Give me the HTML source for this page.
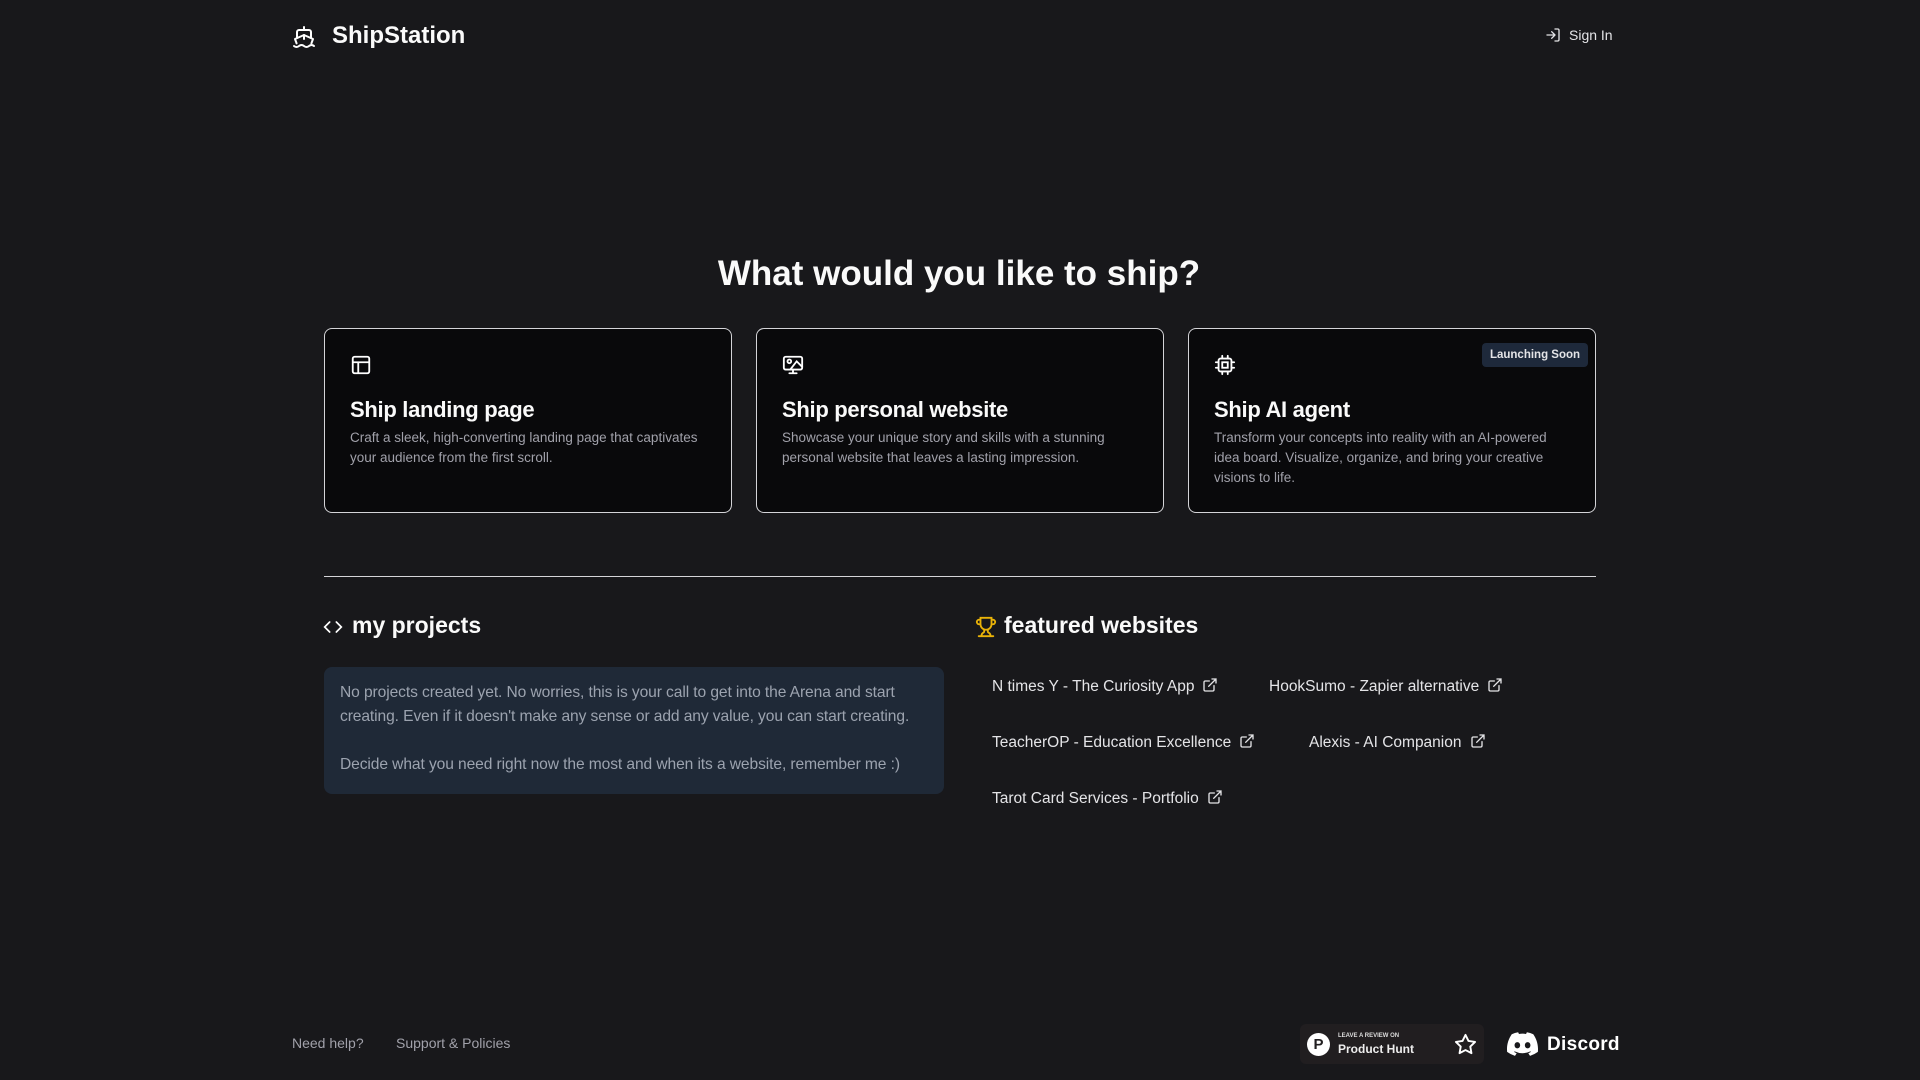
<!DOCTYPE html>
<html><head><meta charset="utf-8"><style>
*{margin:0;padding:0;box-sizing:border-box}
body{width:1920px;height:1080px;background:#18181b;font-family:"Liberation Sans",sans-serif;color:#fafafa;position:relative;overflow:hidden}
.a{position:absolute}
.card{position:absolute;top:328px;width:408px;height:185px;background:#09090b;border:1px solid #d4d4d8;border-radius:8px}
.card svg{position:absolute;left:25px;top:25px}
.card h3{position:absolute;left:25px;top:68px;font-size:22px;font-weight:700;letter-spacing:-0.3px}
.card p{position:absolute;left:25px;top:99px;white-space:nowrap;font-size:13.5px;line-height:20px;color:#a1a1aa}
.lk{position:absolute;font-size:15.5px;color:#e4e4e7;white-space:nowrap}
.lk svg{vertical-align:-2px;margin-left:8px}
</style></head><body>
<svg class="a" style="left:292px;top:25px" width="24" height="24" viewBox="0 0 24 24" fill="none" stroke="#fff" stroke-width="2" stroke-linecap="round" stroke-linejoin="round"><path d="M2 21c.6.5 1.2 1 2.5 1 2.5 0 2.5-2 5-2 1.3 0 1.9.5 2.5 1 .6.5 1.2 1 2.5 1 2.5 0 2.5-2 5-2 1.3 0 1.9.5 2.5 1"/><path d="M19.4 18.4 21 14l-9-4-9 4 1.6 4.4"/><path d="M19 13V7a2 2 0 0 0-2-2H7a2 2 0 0 0-2 2v6"/><path d="M12 10v4M12 2v3"/></svg>
<div class="a" style="left:332px;top:22px;font-size:24px;font-weight:700">ShipStation</div>
<svg class="a" style="left:1545px;top:27px" width="16" height="16" viewBox="0 0 24 24" fill="none" stroke="#e4e4e7" stroke-width="2" stroke-linecap="round" stroke-linejoin="round"><path d="M15 3h4a2 2 0 0 1 2 2v14a2 2 0 0 1-2 2h-4"/><path d="M10 17l5-5-5-5M15 12H3"/></svg>
<div class="a" style="left:1569px;top:27px;font-size:14px;color:#e4e4e7">Sign In</div>
<div class="a" style="left:0;width:1918px;top:254px;text-align:center;font-size:35px;font-weight:700">What would you like to ship?</div>

<div class="card" style="left:324px"><svg width="22" height="22" viewBox="0 0 24 24" fill="none" stroke="#fff" stroke-width="2"><rect x="3" y="3" width="18" height="18" rx="2"/><path d="M3 9h18M9 21V9"/></svg><h3>Ship landing page</h3><p>Craft a sleek, high-converting landing page that captivates<br>your audience from the first scroll.</p></div>
<div class="card" style="left:756px"><svg width="22" height="22" viewBox="0 0 24 24" fill="none" stroke="#fff" stroke-width="2" stroke-linecap="round"><rect x="2" y="3" width="20" height="14" rx="2"/><circle cx="8" cy="8" r="2"/><path d="M22 14l-6-6-7 9M12 17v4M8 21h8"/></svg><h3>Ship personal website</h3><p>Showcase your unique story and skills with a stunning<br>personal website that leaves a lasting impression.</p></div>
<div class="card" style="left:1188px"><svg width="22" height="22" viewBox="0 0 24 24" fill="none" stroke="#fff" stroke-width="2" stroke-linecap="round"><rect x="5" y="5" width="14" height="14" rx="2"/><rect x="9" y="9" width="6" height="6"/><path d="M9 2v3M15 2v3M9 19v3M15 19v3M2 9h3M2 15h3M19 9h3M19 15h3"/></svg><h3>Ship AI agent</h3><p>Transform your concepts into reality with an AI-powered<br>idea board. Visualize, organize, and bring your creative<br>visions to life.</p>
<div class="a" style="left:293px;top:14px;width:106px;height:24px;background:#1e293b;border-radius:4px;font-size:11.5px;font-weight:700;line-height:24px;text-align:center;color:#e4e4e7">Launching Soon</div></div>

<div class="a" style="left:324px;top:576px;width:1272px;height:1px;background:#d4d4d8"></div>
<svg class="a" style="left:323px;top:617px" width="20" height="20" viewBox="0 0 24 24" fill="none" stroke="#fff" stroke-width="2" stroke-linecap="round"><path d="M8 6l-6 6 6 6M16 6l6 6-6 6"/></svg>
<div class="a" style="left:352px;top:612px;font-size:23px;font-weight:700">my projects</div>
<svg class="a" style="left:975px;top:616px" width="22" height="22" viewBox="0 0 24 24" fill="none" stroke="#eab308" stroke-width="2" stroke-linecap="round"><path d="M6 9H4.5a2.5 2.5 0 0 1 0-5H6M18 9h1.5a2.5 2.5 0 0 0 0-5H18M4 22h16M10 14.7V17c0 .6-.5 1-1 1.2C7.9 18.8 7 20.2 7 22M14 14.7V17c0 .6.5 1 1 1.2 1.1.6 2 2 2 3.8M18 2H6v7a6 6 0 0 0 12 0V2z"/></svg>
<div class="a" style="left:1004px;top:612px;font-size:23px;font-weight:700">featured websites</div>

<div class="a" style="left:324px;top:667px;width:620px;height:127px;background:#1f2937;border-radius:8px;padding:14px 16px;font-size:15.6px;line-height:24px;color:#9ca3af;letter-spacing:-0.1px;white-space:nowrap">No projects created yet. No worries, this is your call to get into the Arena and start<br>creating. Even if it doesn't make any sense or add any value, you can start creating.<br><br>Decide what you need right now the most and when its a website, remember me :)</div>

<div class="lk" style="left:992px;top:677px">N times Y - The Curiosity App<svg width="16" height="16" viewBox="0 0 24 24" fill="none" stroke="#e4e4e7" stroke-width="2" stroke-linecap="round"><path d="M18 13v6a2 2 0 0 1-2 2H5a2 2 0 0 1-2-2V8a2 2 0 0 1 2-2h6M15 3h6v6M10 14L21 3"/></svg></div>
<div class="lk" style="left:1269px;top:677px">HookSumo - Zapier alternative<svg width="16" height="16" viewBox="0 0 24 24" fill="none" stroke="#e4e4e7" stroke-width="2" stroke-linecap="round"><path d="M18 13v6a2 2 0 0 1-2 2H5a2 2 0 0 1-2-2V8a2 2 0 0 1 2-2h6M15 3h6v6M10 14L21 3"/></svg></div>
<div class="lk" style="left:992px;top:733px">TeacherOP - Education Excellence<svg width="16" height="16" viewBox="0 0 24 24" fill="none" stroke="#e4e4e7" stroke-width="2" stroke-linecap="round"><path d="M18 13v6a2 2 0 0 1-2 2H5a2 2 0 0 1-2-2V8a2 2 0 0 1 2-2h6M15 3h6v6M10 14L21 3"/></svg></div>
<div class="lk" style="left:1309px;top:733px">Alexis - AI Companion<svg width="16" height="16" viewBox="0 0 24 24" fill="none" stroke="#e4e4e7" stroke-width="2" stroke-linecap="round"><path d="M18 13v6a2 2 0 0 1-2 2H5a2 2 0 0 1-2-2V8a2 2 0 0 1 2-2h6M15 3h6v6M10 14L21 3"/></svg></div>
<div class="lk" style="left:992px;top:789px">Tarot Card Services - Portfolio<svg width="16" height="16" viewBox="0 0 24 24" fill="none" stroke="#e4e4e7" stroke-width="2" stroke-linecap="round"><path d="M18 13v6a2 2 0 0 1-2 2H5a2 2 0 0 1-2-2V8a2 2 0 0 1 2-2h6M15 3h6v6M10 14L21 3"/></svg></div>

<div class="a" style="left:292px;top:1035px;font-size:14px;color:#a1a1aa">Need help?</div>
<div class="a" style="left:396px;top:1035px;font-size:14px;color:#a1a1aa">Support &amp; Policies</div>

<div class="a" style="left:1300px;top:1024px;width:184px;height:40px;background:#211e20;border-radius:6px">
<div class="a" style="left:7px;top:9px;width:23px;height:23px;border-radius:50%;background:#fff;color:#211e20;font-weight:700;font-size:15px;text-align:center;line-height:23px">P</div>
<div class="a" style="left:38px;top:9px;font-size:6px;font-weight:700;color:#ddd">LEAVE A REVIEW ON</div>
<div class="a" style="left:38px;top:18px;font-size:12px;font-weight:700;color:#eee">Product Hunt</div>
<svg class="a" style="left:154px;top:9px" width="23" height="23" viewBox="0 0 24 24" fill="none" stroke="#fff" stroke-width="2" stroke-linejoin="round"><path d="M12 2l3.1 6.3 6.9 1-5 4.9 1.2 6.8L12 17.8 5.8 21l1.2-6.8-5-4.9 6.9-1z"/></svg></div>
<svg class="a" style="left:1507px;top:1032px" width="31" height="24" viewBox="0 0 127 96"><path fill="#fff" d="M107.7 8A105 105 0 0 0 81.5 0a72 72 0 0 0-3.4 6.8 97.7 97.7 0 0 0-29.1 0A72 72 0 0 0 45.6 0 105.9 105.9 0 0 0 19.4 8C2.8 32.6-1.7 56.6.5 80.2A105.7 105.7 0 0 0 32.7 96.5a77.7 77.7 0 0 0 6.9-11.1 68.4 68.4 0 0 1-10.8-5.2c.9-.7 1.8-1.3 2.6-2a75.6 75.6 0 0 0 64.3 0c.9.7 1.7 1.4 2.6 2a68.7 68.7 0 0 1-10.9 5.2 77 77 0 0 0 6.9 11.1 105.3 105.3 0 0 0 32.2-16.2c2.6-27.4-4.5-51.2-18.8-72.3zM42.4 65.7c-6.3 0-11.4-5.7-11.4-12.8s5-12.8 11.4-12.8 11.5 5.8 11.4 12.8-5 12.8-11.4 12.8zm42.2 0c-6.3 0-11.4-5.7-11.4-12.8s5-12.8 11.4-12.8 11.5 5.8 11.4 12.8-5 12.8-11.4 12.8z"/></svg>
<div class="a" style="left:1547px;top:1034px;font-size:19px;font-weight:900;color:#fff;letter-spacing:0.3px">Discord</div>
</body></html>
